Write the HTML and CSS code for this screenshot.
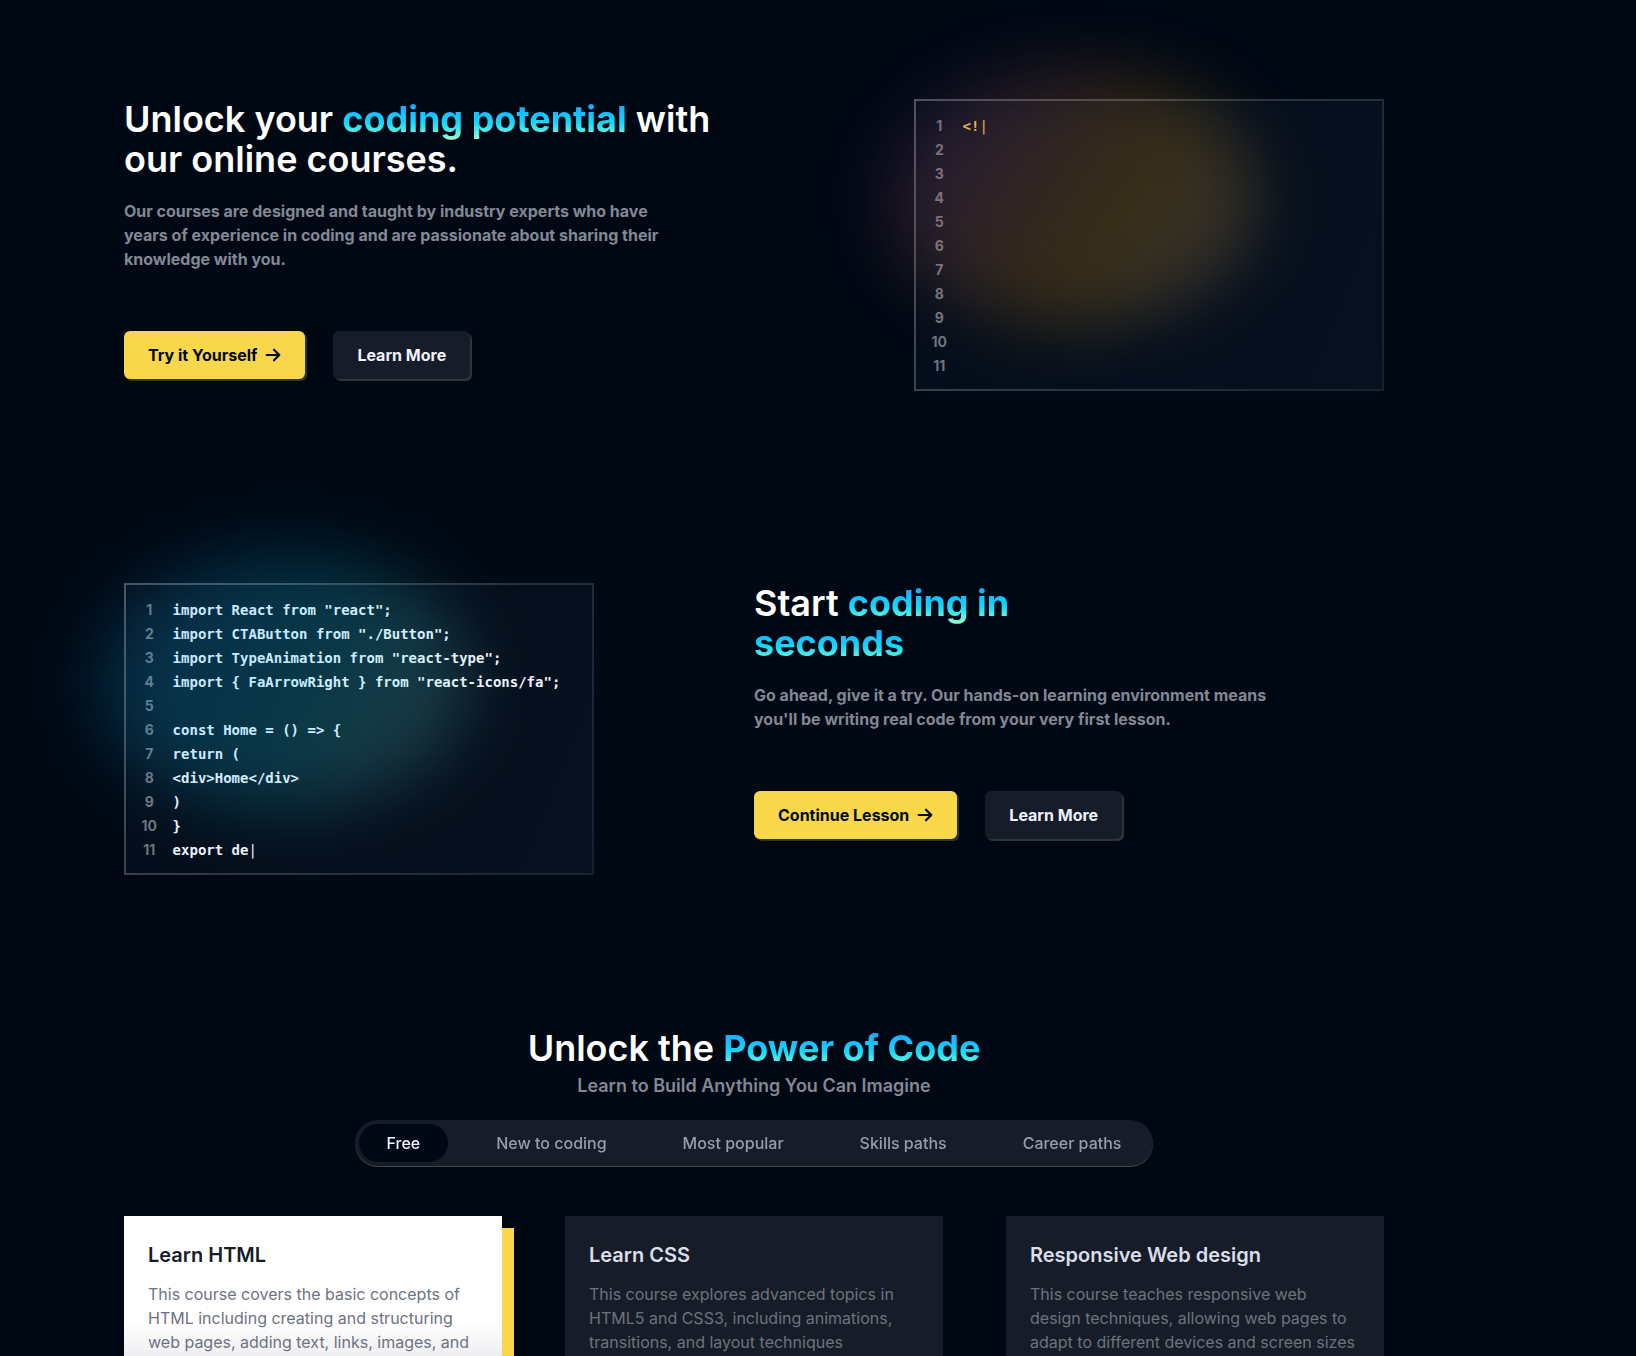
FILE: index.html
```html
<!DOCTYPE html>
<html lang="en">
<head>
<meta charset="utf-8">
<title>Home</title>
<link rel="stylesheet" href="styles.css">
</head>
<body>
<main class="container">
  <section class="codeblock">
    <div class="cb-text">
      <h1 class="cb-heading">Unlock your <span class="hl">coding potential</span> with our online courses.</h1>
      <p class="cb-sub">Our courses are designed and taught by industry experts who have years of experience in coding and are passionate about sharing their knowledge with you.</p>
      <div class="cb-btns">
        <a class="btn btn-yellow" href="#">Try it Yourself
          <svg class="arrow" viewBox="0 0 24 24" width="16" height="16"><path d="M2.5 12h19M13.5 4l8 8-8 8" fill="none" stroke="currentColor" stroke-width="3.2" stroke-linecap="round" stroke-linejoin="round"/></svg>
        </a>
        <a class="btn btn-dark" href="#">Learn More</a>
      </div>
    </div>
    <div class="code-box">
      <div class="glow glow-warm"></div>
      <div class="line-nums">
        <span>1</span><span>2</span><span>3</span><span>4</span><span>5</span><span>6</span><span>7</span><span>8</span><span>9</span><span>10</span><span>11</span>
      </div>
      <div class="code code-yellow">&lt;!<span class="caret">|</span></div>
    </div>
  </section>

  <section class="codeblock codeblock-second">
    <div class="code-box">
      <div class="glow glow-cool"></div>
      <div class="line-nums">
        <span>1</span><span>2</span><span>3</span><span>4</span><span>5</span><span>6</span><span>7</span><span>8</span><span>9</span><span>10</span><span>11</span>
      </div>
      <div class="code code-white">import React from "react";
import CTAButton from "./Button";
import TypeAnimation from "react-type";
import { FaArrowRight } from "react-icons/fa";

const Home = () =&gt; {
return (
&lt;div&gt;Home&lt;/div&gt;
)
}
export de<span class="caret">|</span></div>
    </div>
    <div class="cb-text">
      <h2 class="cb-heading cb-heading-half">Start <span class="hl">coding in seconds</span></h2>
      <p class="cb-sub">Go ahead, give it a try. Our hands-on learning environment means you'll be writing real code from your very first lesson.</p>
      <div class="cb-btns">
        <a class="btn btn-yellow" href="#">Continue Lesson
          <svg class="arrow" viewBox="0 0 24 24" width="16" height="16"><path d="M2.5 12h19M13.5 4l8 8-8 8" fill="none" stroke="currentColor" stroke-width="3.2" stroke-linecap="round" stroke-linejoin="round"/></svg>
        </a>
        <a class="btn btn-dark" href="#">Learn More</a>
      </div>
    </div>
  </section>

  <section class="explore">
    <h2 class="explore-title">Unlock the <span class="hl">Power of Code</span></h2>
    <p class="explore-sub">Learn to Build Anything You Can Imagine</p>
    <div class="tabs">
      <div class="tab active">Free</div>
      <div class="tab">New to coding</div>
      <div class="tab">Most popular</div>
      <div class="tab">Skills paths</div>
      <div class="tab">Career paths</div>
    </div>
    <div class="cards">
      <div class="card active">
        <div class="card-body">
          <h3 class="card-title">Learn HTML</h3>
          <p class="card-desc">This course covers the basic concepts of HTML including creating and structuring web pages, adding text, links, images, and more.</p>
        </div>
        <div class="card-foot"><span>Beginner</span><span>6 Lessons</span></div>
      </div>
      <div class="card">
        <div class="card-body">
          <h3 class="card-title">Learn CSS</h3>
          <p class="card-desc">This course explores advanced topics in HTML5 and CSS3, including animations, transitions, and layout techniques</p>
        </div>
        <div class="card-foot"><span>Beginner</span><span>6 Lessons</span></div>
      </div>
      <div class="card">
        <div class="card-body">
          <h3 class="card-title">Responsive Web design</h3>
          <p class="card-desc">This course teaches responsive web design techniques, allowing web pages to adapt to different devices and screen sizes</p>
        </div>
        <div class="card-foot"><span>Beginner</span><span>6 Lessons</span></div>
      </div>
    </div>
  </section>
</main>
</body>
</html>
```

FILE: styles.css
```css
* {
  box-sizing: border-box;
  margin: 0;
  padding: 0;
}

html {
  overflow: hidden;
}

body {
  background: #000814;
  font-family: Inter, "Noto Sans", sans-serif;
  color: #F1F2FF;
  min-height: 1356px;
}

.container {
  width: 1260px;
  margin-left: 124px;
  padding-top: 99px;
}

.codeblock {
  display: flex;
  justify-content: space-between;
  align-items: flex-start;
}

.codeblock-second {
  margin-top: 192px;
}

.cb-text {
  width: 630px;
  display: flex;
  flex-direction: column;
  gap: 32px;
}

.cb-heading {
  font-size: 36px;
  line-height: 40px;
  font-weight: 600;
  color: #FFFFFF;
}

.cb-heading-half {
  width: 50%;
}

.hl {
  font-weight: 700;
  background: linear-gradient(to bottom, #1FA2FF 12%, #12D8FA 58%, #A6FFCB 100%);
  -webkit-background-clip: text;
  background-clip: text;
  color: transparent;
}

.cb-sub {
  width: 85%;
  margin-top: -12px;
  font-size: 16px;
  line-height: 24px;
  font-weight: 700;
  color: #838894;
}

.cb-btns {
  display: flex;
  gap: 28px;
  margin-top: 28px;
}

.btn {
  display: flex;
  align-items: center;
  gap: 8px;
  padding: 12px 24px;
  border-radius: 6px;
  font-size: 16px;
  line-height: 24px;
  font-weight: 700;
  text-decoration: none;
  box-shadow: 2px 2px 0 0 rgba(255, 255, 255, 0.18);
}

.btn-yellow {
  background: #F8D74A;
  color: #000814;
}

.btn-dark {
  background: #161D29;
  color: #F1F2FF;
}

.arrow {
  display: block;
}

.code-box {
  position: relative;
  width: 470px;
  display: flex;
  padding: 13px 0 11px;
  font-size: 14px;
  line-height: 24px;
  border: 2px solid transparent;
  border-image-slice: 1;
  border-image-source: linear-gradient(121deg, rgba(255, 255, 255, 0.28), rgba(255, 255, 255, 0.16) 50%, rgba(255, 255, 255, 0.08));
  background: linear-gradient(111.93deg, rgba(14, 26, 45, 0.24) -1.4%, rgba(17, 30, 50, 0.38) 104.96%);
}

.glow {
  position: absolute;
  width: 372.95px;
  height: 257.05px;
  left: calc(50% - 186.475px - 76.53px);
  top: calc(50% - 128.525px - 47.47px);
  border-radius: 100%;
  opacity: 0.2;
  filter: blur(34px);
  transform: matrix(1, 0, -0.01, 1, 0, 0);
  pointer-events: none;
}

.glow-warm {
  background: linear-gradient(123.77deg, #8A2BE2 -6.46%, #FFA500 59.04%, #F8F8FF 124.53%);
}

.glow-cool {
  background: linear-gradient(118.19deg, #1FA2FF -3.62%, #12D8FA 50.44%, #A6FFCB 104.51%);
}

.line-nums {
  width: 10%;
  display: flex;
  flex-direction: column;
  text-align: center;
  font-weight: 700;
  color: #6E727F;
}

.code {
  width: 90%;
  padding-right: 4px;
  font-family: "DejaVu Sans Mono", "Liberation Mono", monospace;
  font-weight: 700;
  white-space: pre;
}

.code-yellow {
  color: #E9C646;
}

.code-white {
  color: #F1F2FF;
}

.caret {
  font-weight: 400;
}

.explore {
  margin-top: 153px;
  text-align: center;
}

.explore-title {
  font-size: 36px;
  line-height: 40px;
  font-weight: 600;
  color: #FFFFFF;
}

.explore-sub {
  margin-top: 4px;
  font-size: 18px;
  line-height: 28px;
  font-weight: 600;
  color: #838894;
}

.tabs {
  display: flex;
  gap: 20px;
  width: max-content;
  margin: 20px auto 0;
  padding: 4px;
  background: #161D29;
  border-radius: 9999px;
  filter: drop-shadow(0 1.5px rgba(255, 255, 255, 0.25));
}

.tab {
  padding: 7px 28px;
  border-radius: 9999px;
  font-size: 16px;
  line-height: 24px;
  font-weight: 500;
  color: #999DAA;
}

.tab.active {
  background: #000814;
  color: #F1F2FF;
}

.cards {
  margin-top: 50px;
  display: flex;
  justify-content: space-between;
  text-align: left;
}

.card {
  width: 378px;
  height: 300px;
  background: #161D29;
  display: flex;
  flex-direction: column;
  justify-content: space-between;
}

.card.active {
  background: linear-gradient(to bottom, #FFFFFF 0%, #FFFFFF 36%, #EEEEF1 47%);
  box-shadow: 12px 12px 0 0 #F8D74A;
}

.card-body {
  height: 80%;
  padding: 25px 24px 24px;
  display: flex;
  flex-direction: column;
  gap: 13px;
  border-bottom: 2px dashed #6E727F;
}

.card-title {
  font-size: 20px;
  line-height: 28px;
  font-weight: 600;
  color: #DBDDEA;
}

.card.active .card-title {
  color: #161D29;
}

.card-desc {
  font-size: 16px;
  line-height: 24px;
  color: #6E727F;
}

.card-foot {
  display: flex;
  justify-content: space-between;
  padding: 12px 24px;
  font-size: 16px;
  color: #838894;
}
```
